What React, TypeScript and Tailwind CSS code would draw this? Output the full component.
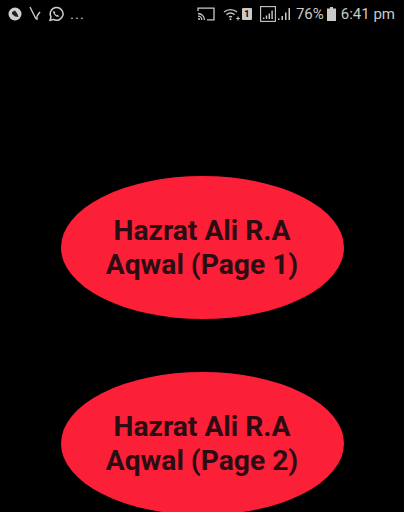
import React from 'react';

const OvalButton: React.FC<{ page: number }> = ({ page }) => (
  <button className="flex h-[143px] w-[283px] shrink-0 flex-col items-center justify-center rounded-[50%] bg-[#fb1f38] font-['Roboto',sans-serif] text-[28.2px] leading-[34px] font-bold text-[#2a0c12]">
    <span>Hazrat Ali R.A</span>
    <span>Aqwal (Page {page})</span>
  </button>
);

const StatusLeft = () => (
  <div className="flex items-center text-[#c9c9c9]">
    <svg viewBox="0 0 14 14" className="ml-[8px] h-[14px] w-[14px]">
      <circle cx="7" cy="7" r="6.5" fill="#d0d0d0" />
      <path d="M4 5l3-1.5 2.5 3.5 1 3-3.5-.5L4 7z" fill="#222" />
    </svg>
    <svg viewBox="0 0 12 16" fill="none" stroke="#c9c9c9" strokeWidth="1.4" className="ml-[7px] h-[16px] w-[12px]">
      <path d="M1 1l6 12M11 6l-3 4M8 10v4" />
    </svg>
    <svg viewBox="0 0 16 16" fill="none" className="ml-[7px] h-[16px] w-[16px]">
      <path d="M2 14.5l1-3.6A6.4 6.4 0 1 1 5.4 13.4z" stroke="#d0d0d0" strokeWidth="1.5" strokeLinejoin="round" />
      <path d="M5.7 4.8c-1 1.2-.4 3 1.2 4.5s3 2 4.1 1.1l-1.2-1.6-1 .5c-.8-.4-1.6-1.2-2-2l.6-.9z" fill="#d0d0d0" />
    </svg>
    <span className="ml-[6px] font-['Roboto',sans-serif] text-[15px] leading-none tracking-[1px]">...</span>
  </div>
);

const StatusRight = () => (
  <div className="flex items-center text-[#c9c9c9]">
    <svg viewBox="0 0 18 14" fill="none" stroke="#c9c9c9" strokeWidth="1.3" className="h-[14px] w-[18px]">
      <path d="M1 4V1.2h16v11.6h-7" />
      <path d="M1 6.5a6.5 6.5 0 0 1 6.5 6.5M1 9.2a3.8 3.8 0 0 1 3.8 3.8" />
      <circle cx="2" cy="12" r="1" fill="#c9c9c9" stroke="none" />
    </svg>
    <svg viewBox="0 0 18 14" fill="none" stroke="#c9c9c9" strokeWidth="1.4" className="ml-[8px] h-[14px] w-[18px]">
      <path d="M1 5a10 10 0 0 1 13 0M3.5 7.6a6.5 6.5 0 0 1 8 0M6 10a3 3 0 0 1 3 0" />
      <circle cx="7.5" cy="12.3" r="1" fill="#c9c9c9" stroke="none" />
      <path d="M15 9.5v4M13.2 11.5h3.6" strokeWidth="1" />
    </svg>
    <div className="ml-[1px] flex h-[12px] w-[10px] items-center justify-center rounded-[1px] bg-[#c9c9c9] font-['Roboto',sans-serif] text-[9px] leading-none font-bold text-black">
      1
    </div>
    <svg viewBox="0 0 16 16" fill="none" className="ml-[8px] h-[16px] w-[16px]">
      <rect x="0.6" y="0.6" width="14.8" height="14.8" stroke="#c9c9c9" strokeWidth="1.1" />
      <path d="M3 13h1.4v-1.6H3zM5.8 13h1.4V9.6H5.8zM8.6 13H10V7.4H8.6zM11.4 13h1.4V4.6h-1.4z" fill="#c9c9c9" />
    </svg>
    <svg viewBox="0 0 13 14" className="ml-[2px] h-[14px] w-[13px]">
      <path d="M0 13h1.5v-1.5H0zM3.5 13H5V9H3.5zM7 13h1.5V5.5H7zM10.5 13H12V1h-1.5z" fill="#c9c9c9" />
    </svg>
    <span className="ml-[5px] font-['Roboto',sans-serif] text-[15px] leading-none">76%</span>
    <svg viewBox="0 0 9 14" className="ml-[3px] h-[14px] w-[9px]">
      <path d="M3 0h3v1.5h3V14H0V1.5h3z" fill="#c9c9c9" />
    </svg>
    <span className="mr-[9px] ml-[5px] font-['Roboto',sans-serif] text-[15px] leading-none">6:41 pm</span>
  </div>
);

export default function App() {
  return (
    <div className="flex h-[512px] w-[404px] flex-col items-center overflow-hidden bg-black">
      <div className="flex h-[28px] w-full shrink-0 items-center justify-between">
        <StatusLeft />
        <StatusRight />
      </div>
      <div className="mt-[148px] flex flex-col items-center gap-[53px]">
        <OvalButton page={1} />
        <OvalButton page={2} />
      </div>
    </div>
  );
}
